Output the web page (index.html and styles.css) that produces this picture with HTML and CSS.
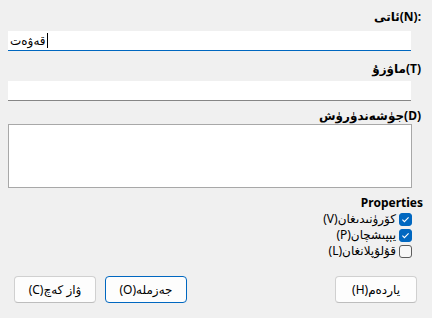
FILE: index.html
```html
<!DOCTYPE html>
<html lang="ug">
<head>
<meta charset="utf-8">
<title>Properties</title>
<link rel="stylesheet" href="styles.css">
</head>
<body>
<div class="dialog">
  <div class="label label-first">ئاتى(N):</div>
  <div class="field field-focus"><span class="value">قەۋەت</span><span class="caret"></span></div>
  <div class="label label-second">ماۋزۇ(T)</div>
  <div class="field field-plain"></div>
  <div class="label label-third">جۈشەندۈرۈش(D)</div>
  <div class="textarea"></div>
  <div class="group-title">Properties</div>
  <div class="check-row">
    <span class="box checked"><svg viewBox="0 0 13 13" width="13" height="13"><path d="M3.4 6.7 L5.4 8.7 L9.6 4.4" fill="none" stroke="#fff" stroke-width="1.1"/></svg></span>
    <span class="check-text">كۆرۈنىدىغان(V)</span>
  </div>
  <div class="check-row">
    <span class="box checked"><svg viewBox="0 0 13 13" width="13" height="13"><path d="M3.4 6.7 L5.4 8.7 L9.6 4.4" fill="none" stroke="#fff" stroke-width="1.1"/></svg></span>
    <span class="check-text">يېپىشچان(P)</span>
  </div>
  <div class="check-row">
    <span class="box"></span>
    <span class="check-text">قۇلۇپلانغان(L)</span>
  </div>
  <div class="buttons">
    <div class="btn">ياردەم(H)</div>
    <div class="spacer"></div>
    <div class="btn btn-default">جەزملە(O)</div>
    <div class="btn btn-cancel">ۋاز كەچ(C)</div>
  </div>
</div>
</body>
</html>
```
FILE: styles.css
```css
html, body {
  margin: 0;
  padding: 0;
}
body {
  background: #f0f0f0;
  font-family: "Segoe UI", "Noto Sans", "DejaVu Sans", sans-serif;
  font-size: 12px;
  color: #000;
  width: 432px;
  height: 318px;
  overflow: hidden;
}
.dialog {
  display: flex;
  flex-direction: column;
  padding: 9px 11px 0 8px;
  box-sizing: border-box;
  height: 318px;
}
.label {
  font-weight: bold;
  line-height: 16px;
  height: 16px;
  text-align: right;
  direction: ltr;
}
.label-second { margin-top: 10px; }
.label-third { margin-top: 7px; }
.field {
  background: #fff;
  height: 20px;
  margin-right: 10px;
  box-sizing: border-box;
  display: flex;
  align-items: center;
  direction: ltr;
  padding-left: 2px;
}
.field-focus {
  margin-top: 6px;
  border-bottom: 1px solid #0067c0;
}
.field-plain {
  margin-top: 4px;
  border-bottom: 1px solid #868686;
}
.value {
  line-height: 16px;
}
.caret {
  width: 1px;
  height: 15px;
  background: #000;
  margin-left: 1px;
}
.textarea {
  background: #fff;
  border: 1px solid #a8a8a8;
  height: 64px;
  box-sizing: border-box;
  margin-right: 9px;
}
.group-title {
  margin-top: 7px;
  font-weight: bold;
  line-height: 16px;
  text-align: right;
  margin-right: -2px;
}
.check-row {
  display: flex;
  direction: rtl;
  align-items: center;
  height: 16px;
  padding-right: 9px;
  gap: 3px;
}
.box {
  width: 13px;
  height: 13px;
  box-sizing: border-box;
  border-radius: 3px;
  border: 1px solid #5c5c5c;
  background: #f7f7f7;
  display: flex;
}
.box.checked {
  background: #0067c0;
  border-color: #0067c0;
}
.box svg {
  margin: -1px;
}
.check-text {
  line-height: 16px;
}
.buttons {
  display: flex;
  direction: rtl;
  margin-top: 17px;
  margin-left: 6px;
  margin-right: 4px;
}
.spacer { flex: 1; }
.btn {
  width: 82px;
  height: 27px;
  box-sizing: border-box;
  border: 1px solid #d0d0d0;
  border-bottom-color: #bdbdbd;
  border-radius: 4px;
  background: #fdfdfd;
  text-align: center;
  line-height: 25px;
}
.btn-default {
  border-color: #0067c0;
}
.btn-cancel {
  margin-right: 9px;
}
```
